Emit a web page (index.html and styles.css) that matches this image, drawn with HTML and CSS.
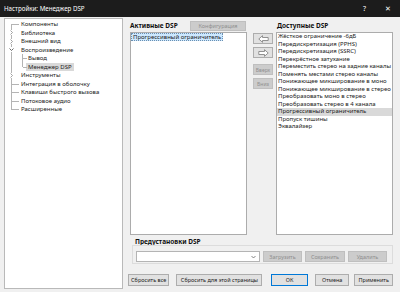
FILE: index.html
```html
<!DOCTYPE html>
<html lang="ru">
<head>
<meta charset="utf-8">
<title>Настройки: Менеджер DSP</title>
<link rel="stylesheet" href="styles.css">
</head>
<body>
<div class="window">
  <div class="titlebar">
    <span class="title">Настройки: Менеджер DSP</span>
    <div class="tb-buttons"><span class="help">?</span><span class="close">✕</span></div>
  </div>
  <div class="main">
    <div class="tree">
      <div class="node first">Компоненты</div>
      <div class="node exp"><span class="expander"><svg viewBox="0 0 5 5" width="5" height="5"><path d="M1.5 0.5 L3.5 2.5 L1.5 4.5" fill="none" stroke="#8a8a8a" stroke-width="0.8"/></svg></span>Библиотека</div>
      <div class="node exp"><span class="expander"><svg viewBox="0 0 5 5" width="5" height="5"><path d="M1.5 0.5 L3.5 2.5 L1.5 4.5" fill="none" stroke="#8a8a8a" stroke-width="0.8"/></svg></span>Внешний вид</div>
      <div class="node exp"><span class="expander"><svg viewBox="0 0 5 5" width="5" height="5"><path d="M0.5 1.5 L2.5 3.5 L4.5 1.5" fill="none" stroke="#444" stroke-width="0.8"/></svg></span>Воспроизведение</div>
      <div class="node child">Вывод</div>
      <div class="node child last-child"><span class="sel">Менеджер DSP</span></div>
      <div class="node exp"><span class="expander"><svg viewBox="0 0 5 5" width="5" height="5"><path d="M1.5 0.5 L3.5 2.5 L1.5 4.5" fill="none" stroke="#8a8a8a" stroke-width="0.8"/></svg></span>Инструменты</div>
      <div class="node">Интеграция в оболочку</div>
      <div class="node">Клавиши быстрого вызова</div>
      <div class="node">Потоковое аудио</div>
      <div class="node last">Расширенные</div>
    </div>
    <div class="content">
      <div class="panels">
        <div class="col">
          <div class="col-head">
            <span class="head-label">Активные DSP</span>
            <span class="btn disabled config">Конфигурация</span>
          </div>
          <div class="list">
            <div class="active-item">Прогрессивный ограничитель</div>
          </div>
        </div>
        <div class="mid">
          <span class="btn arrow-btn"><svg viewBox="0 0 11 8" width="11" height="8"><path d="M0.8 4 L4.5 0.7 V2.5 H10.2 V5.5 H4.5 V7.3 Z" fill="#fff" stroke="#7a7a7a" stroke-width="0.8"/></svg></span>
          <span class="btn arrow-btn second"><svg viewBox="0 0 11 8" width="11" height="8"><path d="M10.2 4 L6.5 0.7 V2.5 H0.8 V5.5 H6.5 V7.3 Z" fill="#fff" stroke="#7a7a7a" stroke-width="0.8"/></svg></span>
          <span class="btn disabled move up">Вверх</span>
          <span class="btn disabled move">Вниз</span>
        </div>
        <div class="col">
          <div class="col-head">
            <span class="head-label">Доступные DSP</span>
          </div>
          <div class="list avail">
            <div class="item">Жёсткое ограничение -6дБ</div>
            <div class="item">Передискретизация (PPHS)</div>
            <div class="item">Передискретизация (SSRC)</div>
            <div class="item">Перекрёстное затухание</div>
            <div class="item">Переместить стерео на задние каналы</div>
            <div class="item">Поменять местами стерео каналы</div>
            <div class="item">Понижающее микширование в моно</div>
            <div class="item">Понижающее микширование в стерео</div>
            <div class="item">Преобразовать моно в стерео</div>
            <div class="item">Преобразовать стерео в 4 канала</div>
            <div class="item hl">Прогрессивный ограничитель</div>
            <div class="item">Пропуск тишины</div>
            <div class="item">Эквалайзер</div>
          </div>
        </div>
      </div>
      <div class="preset-label">Предустановки DSP</div>
      <div class="preset-box">
        <div class="combo"><svg viewBox="0 0 5 4" width="5" height="4"><path d="M0.5 1 L2.5 3 L4.5 1" fill="none" stroke="#555" stroke-width="0.7"/></svg></div>
        <span class="btn disabled p-load">Загрузить</span>
        <span class="btn disabled p-save">Сохранить</span>
        <span class="btn disabled p-del">Удалить</span>
      </div>
      <div class="bottom">
        <span class="btn b-reset">Сбросить все</span>
        <span class="btn b-page">Сбросить для этой страницы</span>
        <span class="btn b-ok">ОК</span>
        <span class="btn b-cancel">Отмена</span>
        <span class="btn b-apply">Применить</span>
      </div>
    </div>
  </div>
</div>
</body>
</html>
```
FILE: styles.css
```css
* { box-sizing: border-box; }
html, body { margin: 0; padding: 0; }
body {
  width: 400px;
  height: 292px;
  overflow: hidden;
  background: #f0f0f0;
  font-family: "Noto Sans", "Open Sans", sans-serif;
  font-size: 6px;
  color: #1a1a1a;
}
.window { display: flex; flex-direction: column; height: 100%; }

.titlebar {
  height: 17px;
  background: #1c1c1c;
  color: #fff;
  display: flex;
  align-items: center;
  justify-content: space-between;
  padding: 0 9px 0 4px;
  font-size: 6.2px;
}
.tb-buttons { display: flex; align-items: center; gap: 19px; }
.help { font-size: 7px; }
.close { font-size: 7px; }

.main {
  display: flex;
  padding: 1px 0 0 4px;
  gap: 7px;
  flex: 1;
}

.tree {
  width: 119px;
  height: 271px;
  background: #fff;
  border: 1px solid #b9b9b9;
  padding-top: 1px;
}
.node {
  position: relative;
  height: 8.5px;
  line-height: 8.5px;
  padding-left: 16px;
  white-space: nowrap;
  color: #222;
}
.node::before {
  content: "";
  position: absolute;
  left: 6px; top: 0; bottom: 0;
  border-left: 1px solid #b4b4b4;
}
.node::after {
  content: "";
  position: absolute;
  left: 7px; width: 7px; top: 4px;
  border-top: 1px solid #b4b4b4;
}
.node.first::before { top: 4px; }
.node.last::before { bottom: 4px; }
.node.exp::after { display: none; }
.expander {
  position: absolute;
  left: 4px; top: 1.5px;
  width: 5px; height: 5px;
  background: #fff;
  display: flex;
}
.node.child {
  padding-left: 23px;
  background: linear-gradient(#b4b4b4, #b4b4b4) 6px 0 / 1px 100% no-repeat;
}
.node.child::before { left: 17px; }
.node.child::after { left: 18px; width: 4px; }
.node.last-child::before { bottom: 4px; }
.sel { background: #d9d9d9; padding: 0 2px; margin-left: -2px; display: inline-block; }

.content { display: flex; flex-direction: column; width: 263px; }

.panels {
  display: grid;
  grid-template-columns: 117px 29px 117px;
}
.col { display: flex; flex-direction: column; }
.col-head {
  height: 14px;
  display: flex;
  align-items: center;
  justify-content: space-between;
  padding-right: 1px;
}
.head-label { font-weight: bold; font-size: 6.5px; color: #111; }
.col:last-child .head-label { padding-left: 1px; }

.btn {
  display: flex;
  align-items: center;
  justify-content: center;
  background: #e1e1e1;
  border: 1px solid #adadad;
  color: #1a1a1a;
  white-space: nowrap;
  font-size: 5.5px;
}
.btn.disabled { background: #cccccc; border-color: #bfbfbf; color: #8f8f8f; }
.config { width: 56px; height: 10px; margin-top: 2px; }

.list {
  height: 203px;
  background: #fff;
  border: 1px solid #acacac;
}
.active-item {
  display: inline-block;
  padding: 0 1px;
  height: 8px;
  line-height: 7px;
  background: #cce8ff;
  border: 1px dotted #6b8fb0;
}
.item { height: 7.5px; line-height: 7.5px; padding-left: 1px; white-space: nowrap; }
.item.hl { background: #d9d9d9; }

.mid {
  display: flex;
  flex-direction: column;
  padding: 15px 0 0 6px;
}
.arrow-btn { width: 20px; height: 11px; }
.arrow-btn.second { margin-top: 3px; }
.move { width: 20px; height: 11px; margin-top: 3px; font-size: 5px; }
.move.up { margin-top: 6px; }

.preset-label {
  margin-top: 3px;
  height: 7px;
  line-height: 7px;
  padding-left: 5px;
  font-weight: bold;
  font-size: 6.5px;
  color: #111;
}
.preset-box {
  margin-left: 2px;
  height: 19px;
  border: 1px solid #dcdcdc;
  padding: 5px 5px 1px 3px;
  display: flex;
  gap: 3px;
}
.combo {
  width: 124px;
  height: 11px;
  background: #fff;
  border: 1px solid #b4b4b4;
  display: flex;
  align-items: center;
  justify-content: flex-end;
  padding-right: 3px;
}
.p-load { width: 39px; height: 11px; }
.p-save { width: 40px; height: 11px; }
.p-del { width: 39px; height: 11px; }

.bottom {
  margin-top: 10px;
  margin-left: -2px;
  display: flex;
}
.bottom .btn { height: 12px; }
.b-reset { width: 42px; }
.b-page { width: 87px; margin-left: 7px; }
.b-ok { width: 37px; margin-left: 9px; border-color: #0078d7; }
.b-cancel { width: 35px; margin-left: 7px; }
.b-apply { width: 39px; margin-left: 5px; }
```
